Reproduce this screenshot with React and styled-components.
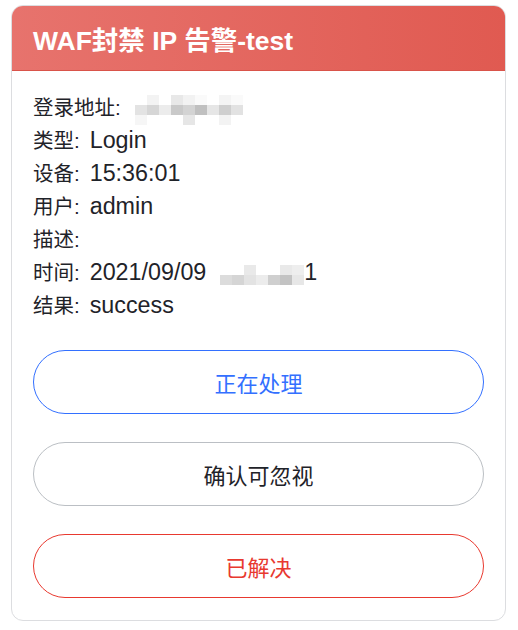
import React from "react";
import styled, { createGlobalStyle } from "styled-components";

const Global = createGlobalStyle`
  html, body { margin: 0; padding: 0; background: #ffffff; }
  body { font-family: "Liberation Sans", "Noto Sans CJK SC", sans-serif; }
`;

const Page = styled.div`
  padding: 5px 12px 10px 11px;
`;

const Card = styled.div`
  border: 1px solid #dcdde0;
  border-radius: 12px;
  overflow: hidden;
  background: #fff;
`;

const Header = styled.div`
  height: 64px;
  display: flex;
  align-items: center;
  padding: 0 21px;
  background: linear-gradient(90deg, #e7736d 0%, #e05a51 100%);
  border-bottom: 1px solid #d9534a;
`;

const Title = styled.h1`
  margin: 0;
  color: #fff;
  font-size: 26.5px;
  font-weight: 700;
  font-family: "Liberation Sans", "Noto Sans CJK SC", sans-serif;
`;

const Body = styled.div`
  padding: 20px 21px 22px 21px;
`;

const Fields = styled.div`
  display: flex;
  flex-direction: column;
`;

const Line = styled.div`
  font-size: 20.5px;
  line-height: 33px;
  height: 33px;
  color: #1f2329;
  white-space: nowrap;
`;

const Value = styled.span`
  font-size: 23.3px;
  margin-left: ${(p) => (p.$tight ? 0 : 10)}px;
`;

const Mosaic = styled.span`
  display: inline-grid;
  vertical-align: middle;
  grid-template-columns: repeat(${(p) => p.$cols}, 12px);
  grid-auto-rows: 10px;
  margin-left: ${(p) => p.$ml || 6}px;
  margin-right: ${(p) => p.$mr || 0}px;
  filter: blur(0.6px);
`;

const Cell = styled.span`
  background: ${(p) => p.$c};
`;

const Buttons = styled.div`
  display: flex;
  flex-direction: column;
  gap: 28px;
  margin-top: 28px;
`;

const Button = styled.button`
  height: 64px;
  border-radius: 32px;
  background: #fff;
  border: 1.5px solid ${(p) => p.$border};
  color: ${(p) => p.$color};
  font-size: 22px;
  font-weight: 400;
  font-family: "Liberation Sans", "Noto Sans CJK SC", sans-serif;
  cursor: pointer;
`;

const m1 = [
  ["#fff", "#f3f3f3", "#fff", "#e8e8e8", "#f2f2f2", "#fafafa", "#fff", "#f4f4f4", "#fafafa"],
  ["#e3e3e3", "#d6d6d6", "#ececec", "#c9c9c9", "#d3d3d3", "#c0c0c0", "#e6e6e6", "#cfcfcf", "#e2e2e2"],
  ["#f6f6f6", "#fff", "#fff", "#fff", "#e6e6e6", "#fff", "#fff", "#f3f3f3", "#fff"],
];
const m2 = [
  ["#fff", "#fff", "#e9e9e9", "#fff", "#fff", "#e9e9e9", "#eeeeee"],
  ["#dcdcdc", "#d5d5d5", "#e3e3e3", "#ececec", "#cfcfcf", "#c3c3c3", "#e7e7e7"],
];

function Blur({ data, ml, mr }) {
  return (
    <Mosaic $cols={data[0].length} $ml={ml} $mr={mr}>
      {data.flat().map((c, i) => (
        <Cell key={i} $c={c} />
      ))}
    </Mosaic>
  );
}

export default function App() {
  return (
    <>
      <Global />
      <Page>
        <Card>
          <Header>
            <Title>WAF封禁 IP 告警-test</Title>
          </Header>
          <Body>
            <Fields>
              <Line>
                登录地址:<Blur data={m1} ml={14} />
              </Line>
              <Line>
                类型:<Value>Login</Value>
              </Line>
              <Line>
                设备:<Value>15:36:01</Value>
              </Line>
              <Line>
                用户:<Value>admin</Value>
              </Line>
              <Line>描述:</Line>
              <Line>
                时间:<Value>2021/09/09</Value>
                <Blur data={m2} ml={14} mr={0} />
                <Value $tight>1</Value>
              </Line>
              <Line>
                结果:<Value>success</Value>
              </Line>
            </Fields>
            <Buttons>
              <Button $border="#3370ff" $color="#3370ff">正在处理</Button>
              <Button $border="#bbbfc4" $color="#1f2329">确认可忽视</Button>
              <Button $border="#e8392f" $color="#e8392f">已解决</Button>
            </Buttons>
          </Body>
        </Card>
      </Page>
    </>
  );
}
